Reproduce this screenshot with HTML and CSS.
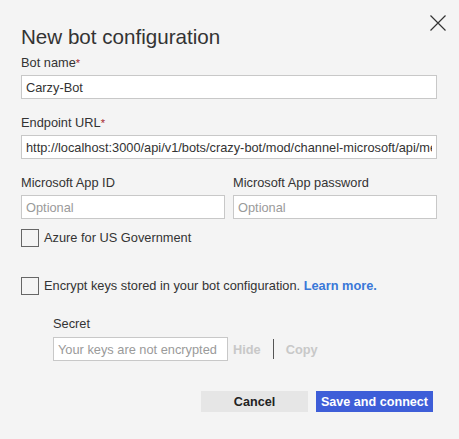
FILE: index.html
```html
<!DOCTYPE html>
<html>
<head>
<meta charset="utf-8">
<link rel="stylesheet" href="styles.css">
</head>
<body>
<div class="dialog">
  <button class="close" aria-label="Close">
    <svg width="16" height="16" viewBox="0 0 16 16"><path d="M0.5 0.5 L15.5 15.5 M15.5 0.5 L0.5 15.5" stroke="#333" stroke-width="1.2" fill="none"/></svg>
  </button>
  <h1 class="title">New bot configuration</h1>
  <div class="field">
    <label class="label">Bot name<span class="req">*</span></label>
    <input class="input" type="text" value="Carzy-Bot">
  </div>
  <div class="field">
    <label class="label">Endpoint URL<span class="req">*</span></label>
    <input class="input" type="text" value="http://localhost:3000/api/v1/bots/crazy-bot/mod/channel-microsoft/api/messages">
  </div>
  <div class="row">
    <div class="field">
      <label class="label">Microsoft App ID</label>
      <input class="input" type="text" placeholder="Optional">
    </div>
    <div class="field">
      <label class="label">Microsoft App password</label>
      <input class="input" type="text" placeholder="Optional">
    </div>
  </div>
  <div class="check gov">
    <span class="box"></span>
    <span class="check-label">Azure for US Government</span>
  </div>
  <div class="check encrypt">
    <span class="box"></span>
    <span class="check-label">Encrypt keys stored in your bot configuration. <a class="link" href="#">Learn more.</a></span>
  </div>
  <div class="secret">
    <label class="label">Secret</label>
    <div class="secret-row">
      <input class="input secret-input" type="text" placeholder="Your keys are not encrypted">
      <span class="action">Hide</span>
      <span class="sep"></span>
      <span class="action">Copy</span>
    </div>
  </div>
  <div class="buttons">
    <button class="btn cancel">Cancel</button>
    <button class="btn primary">Save and connect</button>
  </div>
</div>
</body>
</html>
```

FILE: styles.css
```css
* { box-sizing: border-box; }
html, body { margin: 0; padding: 0; }
body {
  background: #f4f4f4;
  font-family: "Liberation Sans", Arial, sans-serif;
  color: #333;
  width: 459px;
  height: 439px;
  overflow: hidden;
}
.dialog {
  position: relative;
  padding: 24px 22px 0 21px;
}
.close {
  position: absolute;
  top: 15px;
  left: 430px;
  width: 16px;
  height: 16px;
  padding: 0;
  border: 0;
  background: transparent;
  display: block;
}
.close svg { display: block; }
.title {
  margin: 0 0 5px 0;
  font-size: 20.6px;
  line-height: 25px;
  font-weight: normal;
  color: #333;
}
.field { display: flex; flex-direction: column; margin-bottom: 15px; }
.label {
  display: block;
  height: 17px;
  font-size: 12.8px;
  line-height: 17px;
  margin-bottom: 4px;
  color: #333;
}
.req { color: #a4262c; font-size: 11px; line-height: 1; }
.input {
  display: block;
  width: 100%;
  height: 24px;
  margin: 0;
  padding: 0 4px;
  border: 1px solid #c8c8c8;
  background: #fff;
  font-family: "Liberation Sans", Arial, sans-serif;
  font-size: 12.8px;
  color: #333;
  outline: none;
}
.input::placeholder { color: #9a9a9a; }
.row {
  display: grid;
  grid-template-columns: 1fr 1fr;
  column-gap: 8px;
}
.row .field { margin-bottom: 10px; }
.check {
  display: flex;
  align-items: center;
  height: 18px;
}
.box {
  width: 18px;
  height: 18px;
  border: 1px solid #666;
  background: transparent;
  flex: none;
}
.check-label {
  margin-left: 5px;
  font-size: 12.8px;
  line-height: 18px;
  color: #333;
}
.encrypt { margin-top: 30px; }
.link { color: #3a78d8; font-weight: bold; text-decoration: none; }
.secret { margin: 20px 0 0 32px; }
.secret .label { margin-bottom: 5px; }
.secret-row { display: flex; align-items: center; height: 24px; }
.secret-input { width: 175px; flex: none; }
.action {
  font-size: 12.8px;
  font-weight: bold;
  color: #c8c8c8;
}
.secret-input + .action { margin-left: 5px; }
.sep {
  width: 1px;
  height: 20px;
  background: #555;
  margin: 0 12px;
}
.buttons {
  display: flex;
  justify-content: flex-end;
  gap: 8px;
  margin: 30px 4px 0 0;
}
.btn {
  height: 21px;
  border: 0;
  padding: 0;
  font-family: "Liberation Sans", Arial, sans-serif;
  font-size: 12.6px;
  font-weight: bold;
}
.cancel { width: 107px; background: #e6e6e6; color: #222; }
.primary { width: 117px; background: #3e5ed8; color: #fff; }
```
